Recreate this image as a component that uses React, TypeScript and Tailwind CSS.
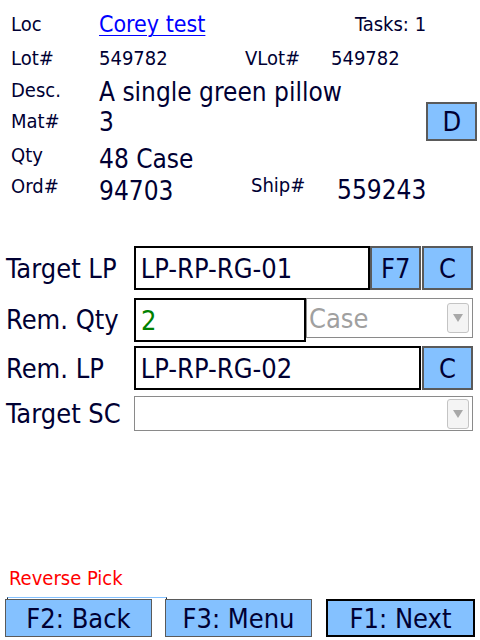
const font = { fontFamily: '"DejaVu Sans Condensed", "DejaVu Sans", sans-serif' };

function Btn({ label, className = "" }: { label: string; className?: string }) {
  return (
    <div
      className={
        "flex items-center justify-center border-2 border-[#5a5a5a] bg-[#84c1ff] text-[27px] leading-none text-[#000033] " +
        className
      }
    >
      {label}
    </div>
  );
}

function Combo({ value, className = "" }: { value?: string; className?: string }) {
  return (
    <div className={"flex items-center border border-[#8a8a8a] bg-white pl-[2px] pr-[3px] " + className}>
      <span className="flex-1 text-[27px] leading-none text-[#a0a0a0]">{value}</span>
      <div className="flex h-[30px] w-[22px] items-center justify-center rounded-[3px] border border-[#c4c4c4] bg-[#f4f4f4]">
        <svg width="12" height="10" viewBox="0 0 12 10">
          <path d="M1 1 L11 1 L6 9 Z" fill="#a8a8a8" />
        </svg>
      </div>
    </div>
  );
}

export default function App() {
  return (
    <div style={font} className="flex h-[640px] w-[480px] flex-col bg-white text-[#000033]">
      {/* header info */}
      <div className="pl-[11px] pt-[14px]">
        <div className="flex h-[34px] items-start">
          <span className="w-[88px] text-[20px] leading-[20px]">Loc</span>
          <span className="mt-[-1px] w-[256px] text-[23px] leading-[23px] text-[#0000ff] underline decoration-1 underline-offset-[3px]">
            Corey test
          </span>
          <span className="text-[20px] leading-[20px]">Tasks: 1</span>
        </div>
        <div className="flex h-[32px] items-start">
          <span className="w-[88px] text-[20px] leading-[20px]">Lot#</span>
          <span className="w-[146px] text-[20px] leading-[20px]">549782</span>
          <span className="w-[86px] text-[20px] leading-[20px]">VLot#</span>
          <span className="text-[20px] leading-[20px]">549782</span>
        </div>
        <div className="flex">
          <div className="flex-1">
            <div className="flex h-[30px] items-start">
              <span className="w-[88px] text-[20px] leading-[20px]">Desc.</span>
              <span className="mt-[-1px] text-[26px] leading-[26px]">A single green pillow</span>
            </div>
            <div className="flex h-[33px] items-start">
              <span className="mt-[1px] w-[88px] text-[20px] leading-[20px]">Mat#</span>
              <span className="mt-[-1px] text-[26px] leading-[26px]">3</span>
            </div>
            <div className="flex h-[31px] items-start">
              <span className="mt-[2px] w-[88px] text-[20px] leading-[20px]">Qty</span>
              <span className="mt-[3px] text-[26px] leading-[26px]">48 Case</span>
            </div>
            <div className="flex h-[32px] items-start">
              <span className="mt-[2px] w-[88px] text-[20px] leading-[20px]">Ord#</span>
              <span className="mt-[4px] w-[152px] text-[26px] leading-[26px]">94703</span>
              <span className="mt-[1px] w-[86px] text-[20px] leading-[20px]">Ship#</span>
              <span className="mt-[3px] text-[26px] leading-[26px]">559243</span>
            </div>
          </div>
          <div className="pr-[9px] pt-[22px]">
            <Btn label="D" className="h-[39px] w-[51px]" />
          </div>
        </div>
      </div>

      {/* form */}
      <div className="mt-[40px] flex flex-col pl-[6px] pr-[7px]">
        <div className="flex h-[44px] items-center">
          <span className="w-[128px] text-[27px] leading-none">Target LP</span>
          <div className="flex h-full w-[237px] items-center border-2 border-black pl-[5px] text-[27px] leading-none">
            LP-RP-RG-01
          </div>
          <Btn label="F7" className="h-full w-[51px]" />
          <Btn label="C" className="ml-[1px] h-full w-[51px]" />
        </div>
        <div className="mt-[8px] flex h-[44px] items-start">
          <span className="mt-[8px] w-[128px] text-[27px] leading-none">Rem. Qty</span>
          <div className="flex h-[44px] w-[172px] items-center border-2 border-black pl-[5px] text-[27px] leading-none text-[#008000]">
            2
          </div>
          <Combo value="Case" className="h-[40px] flex-1" />
        </div>
        <div className="mt-[4px] flex h-[44px] items-center">
          <span className="w-[128px] text-[27px] leading-none">Rem. LP</span>
          <div className="flex h-full w-[288px] items-center border-2 border-black pl-[5px] text-[27px] leading-none">
            LP-RP-RG-02
          </div>
          <Btn label="C" className="ml-[1px] h-full w-[51px]" />
        </div>
        <div className="mt-[6px] flex h-[35px] items-center">
          <span className="w-[128px] text-[27px] leading-none">Target SC</span>
          <Combo className="h-full flex-1" />
        </div>
      </div>

      {/* footer */}
      <div className="mt-auto pb-[3px]">
        <div className="pl-[9px] text-[20px] leading-[20px] text-[#ff0000]">Reverse Pick</div>
        <div className="mt-[11px] flex h-[38px] px-[5px]">
          <div className="relative w-[147px]">
            {/* hidden control peeking out behind the back button */}
            <div className="absolute left-[2px] top-[-2px] h-[32px] w-[160px] border-x border-t border-[#222] border-t-[#84c1ff]" />
            <Btn label="F2: Back" className="relative h-full w-full !border border-[#3a3a3a]" />
          </div>
          <Btn label="F3: Menu" className="relative ml-[13px] w-[147px] !border border-[#3a3a3a]" />
          <Btn label="F1: Next" className="ml-[14px] w-[149px] !border-black" />
        </div>
      </div>
    </div>
  );
}
